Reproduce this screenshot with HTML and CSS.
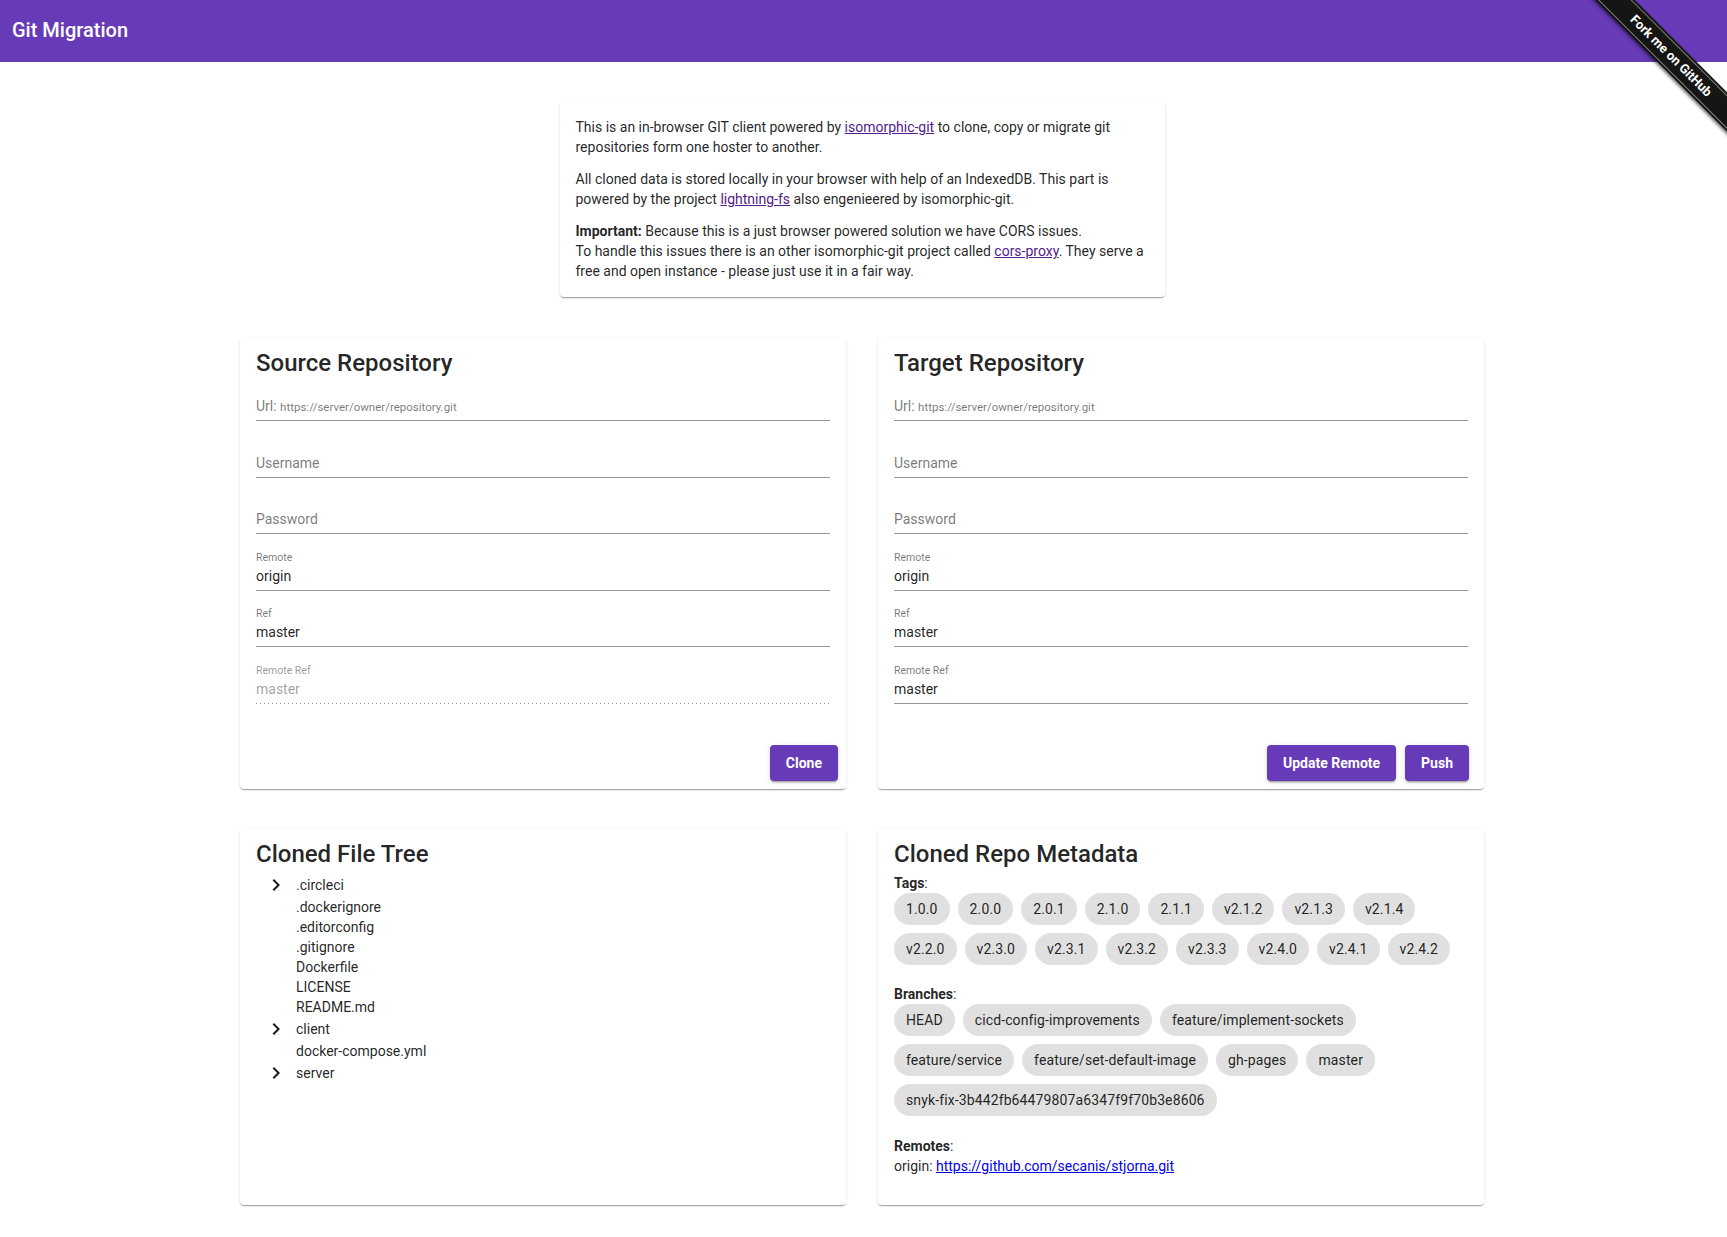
FILE: index.html
```html
<!DOCTYPE html>
<html lang="en">
<head>
<meta charset="utf-8">
<title>Git Migration</title>
<link rel="stylesheet" href="styles.css">
</head>
<body>
<header class="toolbar">
  <span class="app-title">Git Migration</span>
</header>
<a class="fork-ribbon" href="#"><span class="fork-band"><span class="fork-text">Fork me on GitHub</span></span></a>

<main class="page">
  <div class="container">
    <section class="card intro">
      <p>This is an in-browser GIT client powered by <a class="visited" href="#">isomorphic-git</a> to clone, copy or migrate git repositories form one hoster to another.</p>
      <p>All cloned data is stored locally in your browser with help of an IndexedDB. This part is powered by the project <a class="visited" href="#">lightning-fs</a> also engenieered by isomorphic-git.</p>
      <p><b>Important:</b> Because this is a just browser powered solution we have CORS issues.<br>To handle this issues there is an other isomorphic-git project called <a class="visited" href="#">cors-proxy</a>. They serve a free and open instance - please just use it in a fair way.</p>
    </section>

    <div class="grid grid-top">
      <section class="card repo">
        <h2 class="card-title">Source Repository</h2>
        <div class="field">
          <div class="field-label"></div>
          <div class="field-control"><span class="placeholder">Url:</span> <span class="placeholder placeholder-small">https://server/owner/repository.git</span></div>
        </div>
        <div class="field">
          <div class="field-label"></div>
          <div class="field-control"><span class="placeholder">Username</span></div>
        </div>
        <div class="field">
          <div class="field-label"></div>
          <div class="field-control"><span class="placeholder">Password</span></div>
        </div>
        <div class="field">
          <div class="field-label">Remote</div>
          <div class="field-control">origin</div>
        </div>
        <div class="field">
          <div class="field-label">Ref</div>
          <div class="field-control">master</div>
        </div>
        <div class="field field-disabled">
          <div class="field-label">Remote Ref</div>
          <div class="field-control">master</div>
        </div>
        <div class="actions actions-source">
          <button class="btn">Clone</button>
        </div>
      </section>

      <section class="card repo">
        <h2 class="card-title">Target Repository</h2>
        <div class="field">
          <div class="field-label"></div>
          <div class="field-control"><span class="placeholder">Url:</span> <span class="placeholder placeholder-small">https://server/owner/repository.git</span></div>
        </div>
        <div class="field">
          <div class="field-label"></div>
          <div class="field-control"><span class="placeholder">Username</span></div>
        </div>
        <div class="field">
          <div class="field-label"></div>
          <div class="field-control"><span class="placeholder">Password</span></div>
        </div>
        <div class="field">
          <div class="field-label">Remote</div>
          <div class="field-control">origin</div>
        </div>
        <div class="field">
          <div class="field-label">Ref</div>
          <div class="field-control">master</div>
        </div>
        <div class="field">
          <div class="field-label">Remote Ref</div>
          <div class="field-control">master</div>
        </div>
        <div class="actions actions-target">
          <button class="btn">Update Remote</button>
          <button class="btn">Push</button>
        </div>
      </section>
    </div>

    <div class="grid grid-bottom">
      <section class="card tree-card">
        <h2 class="card-title">Cloned File Tree</h2>
        <ul class="tree">
          <li class="node node-expandable"><span class="toggle"><svg viewBox="0 0 24 24" width="24" height="24"><path d="M10 6L8.59 7.41 13.17 12l-4.58 4.59L10 18l6-6z"/></svg></span>.circleci</li>
          <li class="node node-leaf">.dockerignore</li>
          <li class="node node-leaf">.editorconfig</li>
          <li class="node node-leaf">.gitignore</li>
          <li class="node node-leaf">Dockerfile</li>
          <li class="node node-leaf">LICENSE</li>
          <li class="node node-leaf">README.md</li>
          <li class="node node-expandable"><span class="toggle"><svg viewBox="0 0 24 24" width="24" height="24"><path d="M10 6L8.59 7.41 13.17 12l-4.58 4.59L10 18l6-6z"/></svg></span>client</li>
          <li class="node node-leaf">docker-compose.yml</li>
          <li class="node node-expandable"><span class="toggle"><svg viewBox="0 0 24 24" width="24" height="24"><path d="M10 6L8.59 7.41 13.17 12l-4.58 4.59L10 18l6-6z"/></svg></span>server</li>
        </ul>
      </section>

      <section class="card meta-card">
        <h2 class="card-title">Cloned Repo Metadata</h2>
        <div class="meta-label meta-first"><b>Tags</b>:</div>
        <div class="chips">
          <span class="chip">1.0.0</span>
          <span class="chip">2.0.0</span>
          <span class="chip">2.0.1</span>
          <span class="chip">2.1.0</span>
          <span class="chip">2.1.1</span>
          <span class="chip">v2.1.2</span>
          <span class="chip">v2.1.3</span>
          <span class="chip">v2.1.4</span>
          <span class="chip">v2.2.0</span>
          <span class="chip">v2.3.0</span>
          <span class="chip">v2.3.1</span>
          <span class="chip">v2.3.2</span>
          <span class="chip">v2.3.3</span>
          <span class="chip">v2.4.0</span>
          <span class="chip">v2.4.1</span>
          <span class="chip">v2.4.2</span>
        </div>
        <div class="meta-label meta-section"><b>Branches</b>:</div>
        <div class="chips">
          <span class="chip">HEAD</span>
          <span class="chip">cicd-config-improvements</span>
          <span class="chip">feature/implement-sockets</span>
          <span class="chip">feature/service</span>
          <span class="chip">feature/set-default-image</span>
          <span class="chip">gh-pages</span>
          <span class="chip">master</span>
          <span class="chip">snyk-fix-3b442fb64479807a6347f9f70b3e8606</span>
        </div>
        <div class="meta-label meta-section"><b>Remotes</b>:</div>
        <div class="meta-line">origin: <a class="link" href="#">https://github.com/secanis/stjorna.git</a></div>
      </section>
    </div>
  </div>
</main>
</body>
</html>
```

FILE: styles.css
```css
html, body {
  margin: 0;
  padding: 0;
}

body {
  font-family: Roboto, "Noto Sans", "Liberation Sans", sans-serif;
  color: rgba(0, 0, 0, 0.87);
  background: #fff;
}

.toolbar {
  height: 62px;
  box-sizing: border-box;
  background: #673ab7;
  color: #fff;
  display: flex;
  align-items: center;
  padding: 0 12px 2px;
}

.app-title {
  font-size: 20px;
  font-weight: 500;
  line-height: 32px;
}

/* Fork me ribbon (overlay) */
.fork-ribbon {
  position: absolute;
  top: 0;
  right: 0;
  width: 150px;
  height: 150px;
  overflow: hidden;
  z-index: 10;
  text-decoration: none;
}

.fork-band {
  position: absolute;
  left: -16px;
  top: 42px;
  width: 220px;
  height: 28px;
  box-sizing: border-box;
  padding: 2px 0;
  background: #151513;
  transform: rotate(45deg);
  box-shadow: 0 2px 3px rgba(0, 0, 0, 0.5);
}

.fork-text {
  display: block;
  height: 24px;
  box-sizing: border-box;
  border-top: 1px solid rgba(255, 255, 255, 0.45);
  border-bottom: 1px solid rgba(255, 255, 255, 0.45);
  color: #fff;
  font: 700 13px/22px Roboto, "Liberation Sans", sans-serif;
  text-align: center;
  text-shadow: 0 -1px rgba(0, 0, 0, 0.5);
}

.page {
  padding: 40px 3px 20px 0;
}

.container {
  width: 1244px;
  margin: 0 auto;
}

.card {
  background: #fff;
  border-radius: 4px;
  box-sizing: border-box;
  box-shadow: 0 2px 1px -1px rgba(0, 0, 0, 0.2), 0 1px 1px 0 rgba(0, 0, 0, 0.14), 0 1px 3px 0 rgba(0, 0, 0, 0.12);
}

.intro {
  width: 605px;
  margin: 0 auto;
  padding: 15px 16px 16px;
  font-size: 14px;
  line-height: 20px;
}

.intro p {
  margin: 0 0 12px;
}

.intro p:last-child {
  margin-bottom: 0;
}

.intro b {
  font-weight: 700;
}

.visited {
  color: #551a8b;
}

.link {
  color: #0000ee;
}

.grid {
  display: grid;
  grid-template-columns: 1fr 1fr;
  column-gap: 32px;
}

.grid-top {
  margin-top: 41px;
}

.grid-bottom {
  margin-top: 40px;
}

.card-title {
  margin: 0;
  font-size: 24px;
  font-weight: 500;
  line-height: 31px;
  color: rgba(0, 0, 0, 0.87);
}

.repo {
  display: flex;
  flex-direction: column;
  padding: 10px 16px 8px;
}

.field {
  margin-bottom: 14.6px;
  font-size: 14px;
}

.field-label {
  height: 17px;
  font-size: 10.5px;
  line-height: 17px;
  color: rgba(0, 0, 0, 0.54);
}

.field-control {
  height: 20px;
  line-height: 20px;
  padding-bottom: 4px;
  border-bottom: 1px solid rgba(0, 0, 0, 0.42);
  color: rgba(0, 0, 0, 0.87);
  white-space: nowrap;
}

.placeholder {
  color: rgba(0, 0, 0, 0.54);
}

.placeholder-small {
  font-size: 11.5px;
}

.field-disabled .field-label {
  color: rgba(0, 0, 0, 0.42);
}

.field-disabled .field-control {
  color: rgba(0, 0, 0, 0.38);
  border-bottom: 0;
  padding-bottom: 5px;
  background-image: linear-gradient(to right, rgba(0, 0, 0, 0.42) 0, rgba(0, 0, 0, 0.42) 33%, transparent 0);
  background-size: 4px 1px;
  background-repeat: repeat-x;
  background-position: 0 bottom;
}

.actions {
  margin: auto -16px 0;
  padding: 26.4px 8px 0;
  display: flex;
  justify-content: flex-end;
  gap: 9px;
}

.actions-target {
  padding-right: 15px;
}

.btn {
  height: 36px;
  padding: 0 16px;
  border: 0;
  border-radius: 4px;
  background: #673ab7;
  color: #fff;
  font-family: Roboto, "Liberation Sans", sans-serif;
  font-size: 14px;
  font-weight: 700;
  line-height: 36px;
  box-shadow: 0 3px 1px -2px rgba(0, 0, 0, 0.2), 0 2px 2px 0 rgba(0, 0, 0, 0.14), 0 1px 5px 0 rgba(0, 0, 0, 0.12);
  cursor: pointer;
}

/* File tree */
.tree-card {
  padding: 10px 16px 16px;
}

.tree {
  list-style: none;
  margin: 3px 0 0;
  padding: 0;
  font-size: 14px;
}

.node {
  display: flex;
  align-items: center;
  color: rgba(0, 0, 0, 0.87);
}

.node-expandable {
  height: 24px;
}

.node-leaf {
  height: 20px;
  padding-left: 40px;
}

.toggle {
  width: 40px;
  height: 24px;
  display: flex;
  align-items: center;
  justify-content: center;
}

.toggle svg {
  display: block;
  fill: #1a1a1a;
}

/* Metadata */
.meta-card {
  padding: 10px 16px 29px;
  font-size: 14px;
}

.meta-label {
  line-height: 20px;
}

.meta-label b {
  font-weight: 700;
}

.meta-first {
  margin-top: 3px;
}

.meta-section {
  margin-top: 19.5px;
}

.meta-line {
  line-height: 20px;
}

.chips {
  display: flex;
  flex-wrap: wrap;
  gap: 8px;
}

.chip {
  display: inline-flex;
  align-items: center;
  height: 32px;
  padding: 0 12px;
  border-radius: 16px;
  background: #e0e0e0;
  color: rgba(0, 0, 0, 0.87);
  font-size: 14px;
  letter-spacing: 0.12px;
  white-space: nowrap;
}
```
